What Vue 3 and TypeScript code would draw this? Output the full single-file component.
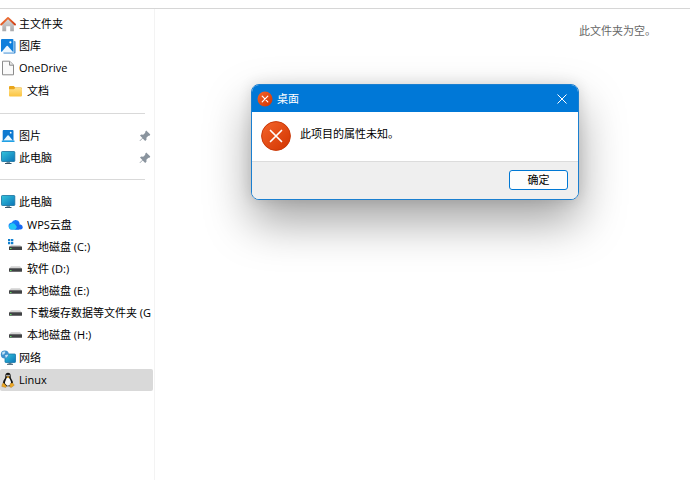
<script setup lang="ts">
import { ref } from 'vue'

interface TreeNode {
  id: string
  label: string
  icon: string
  pinned?: boolean
  children?: TreeNode[]
}

const groups: TreeNode[][] = [
  [
    { id: 'home', label: '主文件夹', icon: 'home' },
    { id: 'gallery', label: '图库', icon: 'gallery' },
    {
      id: 'onedrive',
      label: 'OneDrive',
      icon: 'file',
      children: [{ id: 'docs', label: '文档', icon: 'folder' }],
    },
  ],
  [
    { id: 'pictures', label: '图片', icon: 'pictures', pinned: true },
    { id: 'pc-pinned', label: '此电脑', icon: 'pc', pinned: true },
  ],
  [
    {
      id: 'pc',
      label: '此电脑',
      icon: 'pc',
      children: [
        { id: 'wps', label: 'WPS云盘', icon: 'cloud' },
        { id: 'c', label: '本地磁盘 (C:)', icon: 'system-drive' },
        { id: 'd', label: '软件 (D:)', icon: 'drive' },
        { id: 'e', label: '本地磁盘 (E:)', icon: 'drive' },
        { id: 'g', label: '下载缓存数据等文件夹 (G', icon: 'drive' },
        { id: 'h', label: '本地磁盘 (H:)', icon: 'drive' },
      ],
    },
    { id: 'network', label: '网络', icon: 'network' },
    { id: 'linux', label: 'Linux', icon: 'linux' },
  ],
]

const selected = ref('linux')
const dialogOpen = ref(true)
</script>

<template>
  <svg class="sprite" aria-hidden="true">
    <defs>
      <linearGradient id="g-screen" x1="0" y1="0" x2="1" y2="1">
        <stop offset="0" stop-color="#35c5dc" />
        <stop offset="1" stop-color="#0a74b8" />
      </linearGradient>
      <linearGradient id="g-roof" x1="0" y1="0" x2="1" y2="1">
        <stop offset="0" stop-color="#f47b3c" />
        <stop offset="1" stop-color="#cf3f16" />
      </linearGradient>
      <linearGradient id="g-wall" x1="0" y1="0" x2="0" y2="1">
        <stop offset="0" stop-color="#dcdcdc" />
        <stop offset="1" stop-color="#a9a9ab" />
      </linearGradient>
      <linearGradient id="g-folder" x1="0" y1="0" x2="0" y2="1">
        <stop offset="0" stop-color="#ffe08a" />
        <stop offset="1" stop-color="#fbc440" />
      </linearGradient>
      <linearGradient id="g-cloud" x1="0" y1="0" x2="1" y2="1">
        <stop offset="0" stop-color="#1e8bff" />
        <stop offset="1" stop-color="#0d62ee" />
      </linearGradient>
      <linearGradient id="g-error" x1="0" y1="0" x2="1" y2="1">
        <stop offset="0" stop-color="#f4652b" />
        <stop offset="1" stop-color="#d13300" />
      </linearGradient>
    </defs>

    <symbol id="i-home" viewBox="0 0 16 16">
      <path d="M2.300 7 8 2l5.900 5v8.200h-3.700V10.200H6.200v5H2.300z" fill="url(#g-wall)" />
      <path d="M1.200 8.500 8 1.900l7 6.600" fill="none" stroke="url(#g-roof)" stroke-width="1.900" stroke-linecap="round" stroke-linejoin="round" />
    </symbol>
    <symbol id="i-gallery" viewBox="0 0 16 16">
      <path d="M13.500 3h1a1 1 0 0 1 1 1v10.500a1 1 0 0 1-1 1H3.500v-1.200h10z" fill="#2a80cf" />
      <rect x="1" y="1" width="12.500" height="13" rx="1" fill="#0f7fdc" />
      <path d="M14 1.500v13H3" fill="none" stroke="#d5ebfa" stroke-width=".6" />
      <path d="M1.600 14 6.600 8a.8.8 0 0 1 1.200 0L13 14z" fill="#eef8ff" />
      <circle cx="10.400" cy="4.300" r="1.100" fill="#fff" />
    </symbol>
    <symbol id="i-file" viewBox="0 0 16 16">
      <path d="M2.500 1.200h7.200L13.500 5v9.800h-11z" fill="#fafafa" stroke="#8b8b8b" />
      <path d="M9.500 1.400v3.800h3.800" fill="#e9e9e9" stroke="#8b8b8b" />
    </symbol>
    <symbol id="i-folder" viewBox="0 0 16 16">
      <path d="M2 4a1 1 0 0 1 1-1h3.700l1.500 1.500H14a1 1 0 0 1 1 1V8H2z" fill="#e9a51b" />
      <path d="M2 6.300h4.900L8.300 5H14a1 1 0 0 1 1 1v6.500a1 1 0 0 1-1 1H3a1 1 0 0 1-1-1z" fill="url(#g-folder)" />
    </symbol>
    <symbol id="i-pictures" viewBox="0 0 16 16">
      <rect x="2.700" y="2" width="10.800" height="11" rx="1" fill="#0d79d0" />
      <path d="M3.200 12.800 7.500 7.600a.8.8 0 0 1 1.200 0l4.300 5.200z" fill="#eaf8ff" />
      <circle cx="10.700" cy="4.700" r=".9" fill="#fff" />
      <path d="M1.800 12.500h12.700V14H1.800z" fill="#20a1e5" />
    </symbol>
    <symbol id="i-pc" viewBox="0 0 16 16">
      <path d="M6.500 11.500h3.500v2H6.500z" fill="#7f95a3" />
      <path d="M5 13.500h6.500" stroke="#39566a" />
      <rect x="1.500" y="1.500" width="13.300" height="10" rx=".8" fill="url(#g-screen)" stroke="#18719e" stroke-width=".8" />
    </symbol>
    <symbol id="i-cloud" viewBox="0 0 16 16">
      <path d="M5.500 12.500a3.500 3.500 0 0 1-.8-7A4.200 4.200 0 0 1 12.600 6L12 12.500z" fill="url(#g-cloud)" />
      <path d="M2 9.500a3.500 3.500 0 0 1 6.300-1.700l3.500 4.700H5a3 3 0 0 1-3-3z" fill="#22c7f5" />
      <path d="M7.500 12.500c1.700-.6 2.200-2.300 2.900-3.800a3 3 0 0 1 5.400 1.500 2.400 2.400 0 0 1-2.400 2.300z" fill="#1769f2" />
    </symbol>
    <symbol id="i-drive" viewBox="0 0 16 16">
      <path d="M4 5.300h9l2 2.300H2z" fill="#d2d2d2" />
      <rect x="2" y="7.300" width="13" height="3.500" rx=".5" fill="#404244" />
      <rect x="3" y="9" width="1.500" height="1" fill="#5fdc66" />
    </symbol>
    <symbol id="i-system-drive" viewBox="0 0 16 16">
      <path d="M1 0h2.300v2.300H1zM4 0h2.300v2.300H4zM1 3h2.300v2.300H1zM4 3h2.300v2.300H4z" fill="#107fce" />
      <path d="M4 6h9l2 2H2z" fill="#d2d2d2" />
      <rect x="2" y="7.500" width="13" height="3.500" rx=".5" fill="#404244" />
      <rect x="3" y="9" width="1.500" height="1" fill="#5fdc66" />
    </symbol>
    <symbol id="i-network" viewBox="0 0 16 16">
      <path d="M8.500 12.500h3v1.500h-3z" fill="#6f8796" />
      <path d="M7 14.300h6" stroke="#39566a" />
      <rect x="5" y="4" width="10.500" height="8.500" rx=".7" fill="url(#g-screen)" stroke="#1776a8" stroke-width=".8" />
      <circle cx="4.800" cy="4.500" r="4" fill="#3f91cd" />
      <path d="M2.200 2.200c1.500-1 2.500-.8 3.200-.3L4.200 4.200l-2 .5zM5 5.200l2.500-.8.6 1.200-2.200 2.300z" fill="#c3e3f6" />
    </symbol>
    <symbol id="i-linux" viewBox="0 0 16 16">
      <path d="M8 .7c-1.900 0-2.800 1.300-2.700 3.200.1 1.700-.3 2.400-1.200 3.700C3.300 8.900 2.700 10.500 3 12l2.500 2.300h5.200L13 12c.3-1.700-.5-3.400-1.300-4.600-.8-1.200-1-1.900-1-3.600C10.700 1.900 9.700.7 8 .7z" fill="#151515" />
      <path d="M7.900 5.400c-1 .1-1.500.6-1.700 1.500-.5 1.500-1.500 3-1.200 4.600l2.200 2.300 3-.5c1-1.500 1-3.300.4-4.600-.7-1.400-.8-3-2.700-3.300z" fill="#f7f7f7" />
      <ellipse cx="7" cy="3.600" rx=".7" ry=".9" fill="#fff" />
      <ellipse cx="9" cy="3.600" rx=".7" ry=".9" fill="#fff" />
      <path d="M6.300 5 8 4.200 9.700 5 8 6.200z" fill="#f0a91e" />
      <path d="m3.500 10.800 3.100 3.400-.8 1.300-4-.9.300-2.400zM12.500 10.800l1.800 2.400-3 2.300-1.500-.5.200-3.300z" fill="#eda725" stroke="#8c6218" stroke-width=".3" />
    </symbol>
    <symbol id="i-pin" viewBox="0 0 12 12">
      <path d="M7.200.500 11.300 4.600 10.200 5.900l-.8-.2-2 2.100.1 2L6.200 11 3.700 8.400 1 11H.700v-.5L3.400 8 1 5.600l1.200-1.100 2 .2 2.100-2-.2-.8z" fill="#8a949e" />
    </symbol>
    <symbol id="i-error" viewBox="0 0 30 30">
      <circle cx="15" cy="15" r="14.400" fill="url(#g-error)" stroke="#c93a0a" />
      <path d="m9.500 9.500 11 11m0-11-11 11" stroke="#fff" stroke-width="1.700" stroke-linecap="round" />
    </symbol>
  </svg>

  <div class="explorer">
    <div class="toolbar-edge"></div>
    <div class="panes">
      <nav class="sidebar" aria-label="导航窗格">
        <ul v-for="(group, index) in groups" :key="index" class="group">
          <li v-for="node in group" :key="node.id">
            <a
              href="#"
              class="row"
              :class="{ selected: selected === node.id }"
              @click.prevent="selected = node.id"
            >
              <svg class="icon" aria-hidden="true"><use :href="'#i-' + node.icon" /></svg>
              <span class="label">{{ node.label }}</span>
              <svg v-if="node.pinned" class="pin" aria-hidden="true"><use href="#i-pin" /></svg>
            </a>
            <ul v-if="node.children" class="children">
              <li v-for="child in node.children" :key="child.id">
                <a
                  href="#"
                  class="row nested"
                  :class="{ selected: selected === child.id }"
                  @click.prevent="selected = child.id"
                >
                  <svg class="icon" aria-hidden="true"><use :href="'#i-' + child.icon" /></svg>
                  <span class="label">{{ child.label }}</span>
                </a>
              </li>
            </ul>
          </li>
        </ul>
      </nav>
      <main class="content">
        <p class="empty">此文件夹为空。</p>
      </main>
    </div>

    <section v-if="dialogOpen" class="dialog" role="alertdialog" aria-labelledby="dialog-title" aria-describedby="dialog-text">
      <header class="titlebar">
        <svg class="title-icon" viewBox="0 0 16 16" aria-hidden="true">
          <circle cx="8" cy="8" r="7.500" fill="url(#g-error)" />
          <path d="m5.200 5.200 5.600 5.600m0-5.600-5.600 5.600" stroke="#fff" stroke-width="1.200" stroke-linecap="round" />
        </svg>
        <h1 id="dialog-title">桌面</h1>
        <button class="close" type="button" aria-label="关闭" @click="dialogOpen = false">
          <svg viewBox="0 0 10 10" aria-hidden="true"><path d="m.5.500 9 9m0-9-9 9" stroke="#fff" /></svg>
        </button>
      </header>
      <div class="message">
        <svg class="message-icon" aria-hidden="true"><use href="#i-error" /></svg>
        <p id="dialog-text">此项目的属性未知。</p>
      </div>
      <footer class="actions">
        <button class="confirm" type="button" @click="dialogOpen = false">确定</button>
      </footer>
    </section>
  </div>
</template>

<style>
body {
  margin: 0;
  background: #fff;
}
</style>

<style scoped>
.sprite {
  position: absolute;
  width: 0;
  height: 0;
}

.explorer {
  position: relative;
  display: flex;
  flex-direction: column;
  min-height: 100vh;
  overflow: hidden;
  color: #000;
  font-family: "Open Sans", "Noto Sans CJK SC", sans-serif;
  font-size: 11px;
  line-height: 16px;
}

.toolbar-edge {
  height: 8px;
  border-bottom: 1px solid #d6d6d6;
}

.panes {
  display: flex;
  flex: 1;
}

.sidebar {
  box-sizing: border-box;
  flex: none;
  width: 155px;
  padding: 4px 1px 0 0;
  border-right: 1px solid #f3f3f3;
}

ul {
  margin: 0;
  padding: 0;
  list-style: none;
}

.group + .group::before {
  content: "";
  display: block;
  margin: 10px 8px 11px 0;
  border-top: 1px solid #d9d9d9;
}

.children {
  padding: 1px 0;
}

.row {
  display: flex;
  align-items: center;
  gap: 3px;
  height: 22px;
  border-radius: 2px;
  color: inherit;
  text-decoration: none;
  white-space: nowrap;
  overflow: hidden;
}

.row.nested {
  gap: 4px;
  padding-left: 7px;
}

.row.selected {
  background: #d9d9d9;
}

.icon {
  flex: none;
  width: 16px;
  height: 16px;
}

.label {
  flex: 1;
  min-width: 0;
  overflow: hidden;
}

.pin {
  flex: none;
  width: 12px;
  height: 12px;
  margin-right: 2px;
}

.content {
  flex: 1;
  min-width: 0;
}

.empty {
  margin: 14px 34px 0 0;
  color: #666;
  text-align: right;
}

.dialog {
  position: absolute;
  top: 84px;
  left: 251px;
  box-sizing: border-box;
  width: 328px;
  border: 1px solid #1a7fd0;
  border-radius: 8px;
  overflow: hidden;
  background: #fff;
  box-shadow: 0 22px 46px rgba(0, 0, 0, 0.36), 0 0 14px rgba(0, 0, 0, 0.12);
}

.titlebar {
  display: flex;
  align-items: center;
  gap: 4px;
  height: 27px;
  padding: 0 5px;
  background: #0078d7;
  color: #fff;
}

.title-icon {
  width: 16px;
  height: 16px;
}

h1 {
  flex: 1;
  margin: 0;
  font-size: 11px;
  font-weight: 400;
}

button {
  font: inherit;
  color: inherit;
}

.close {
  display: grid;
  place-items: center;
  width: 22px;
  height: 22px;
  padding: 0;
  border: 0;
  background: transparent;
}

.close svg {
  width: 10px;
  height: 10px;
}

.message {
  display: flex;
  align-items: flex-start;
  gap: 9px;
  padding: 9px 9px 10px;
}

.message-icon {
  flex: none;
  width: 30px;
  height: 30px;
}

.message p {
  margin: 5px 0 0;
}

.actions {
  display: flex;
  justify-content: flex-end;
  padding: 8px 10px 9px;
  border-top: 1px solid #dcdcdc;
  background: #efefef;
}

.confirm {
  width: 59px;
  height: 20px;
  padding: 0;
  border: 1px solid #0078d4;
  border-radius: 3px;
  background: #fdfdfd;
  line-height: 18px;
}
</style>
